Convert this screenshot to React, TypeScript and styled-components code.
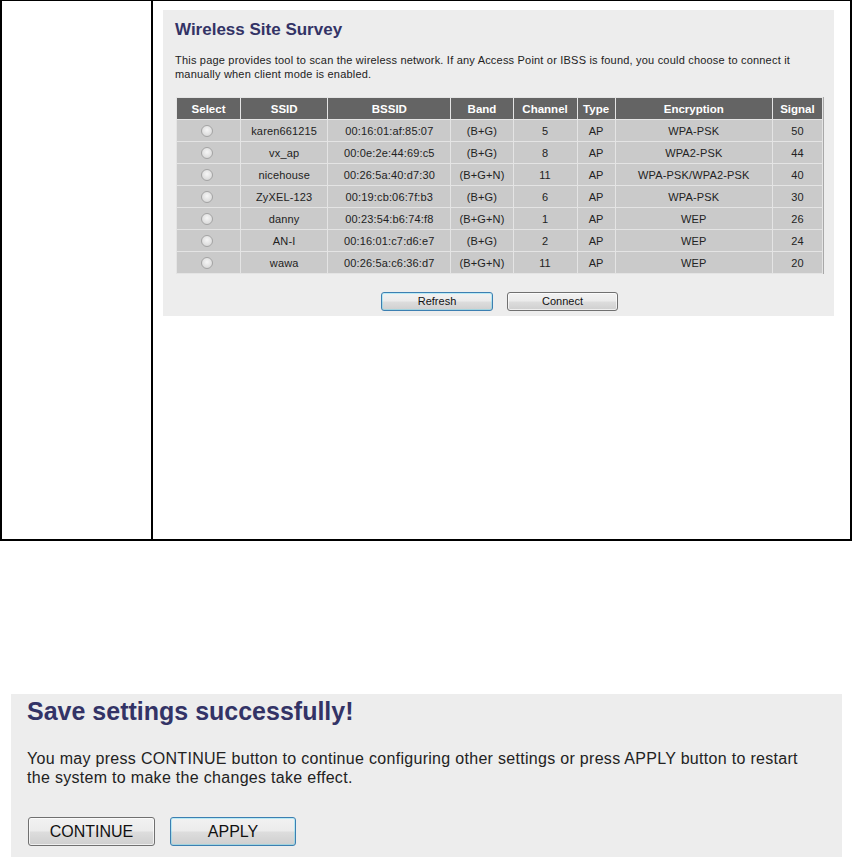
import React from "react";
import styled, { createGlobalStyle } from "styled-components";

const GlobalStyle = createGlobalStyle`
  html, body {
    margin: 0;
    padding: 0;
    background: #ffffff;
  }
  body {
    font-family: Arial, "Liberation Sans", sans-serif;
    color: #222222;
  }
`;

const Page = styled.div`
  width: 853px;
  height: 858px;
  display: flex;
  flex-direction: column;
  overflow: hidden;
`;

const OuterTable = styled.div`
  width: 852px;
  height: 541px;
  box-sizing: border-box;
  display: grid;
  grid-template-columns: 151px 1fr;
  border-top: 1px solid #000;
  border-left: 2px solid #000;
  border-right: 2px solid #000;
  border-bottom: 2px solid #000;
`;

const SideCell = styled.div`
  border-right: 2px solid #000;
`;

const MainCell = styled.div`
  padding: 9px 0 0 10px;
`;

const SurveyPanel = styled.div`
  width: 671px;
  height: 306px;
  box-sizing: border-box;
  background: #ededed;
  padding: 10px 0 0 12px;
  display: flex;
  flex-direction: column;
`;

const PanelTitle = styled.h2<{ $size: number }>`
  margin: 0;
  font-family: Arial, "Liberation Sans", sans-serif;
  font-weight: bold;
  font-size: ${(p) => p.$size}px;
  line-height: ${(p) => Math.round(p.$size * 1.2)}px;
  color: #333366;
`;

const Description = styled.p`
  margin: 13px 0 0 0;
  font-size: 11px;
  line-height: 14px;
  letter-spacing: 0.2px;
  color: #222;
  width: 650px;
`;

const SurveyTable = styled.table`
  margin: 16px 0 0 1px;
  border-collapse: separate;
  border-spacing: 1px;
  background: #e4e4e4;
  border-right: 1px solid #a8a8a8;
  table-layout: fixed;
  width: 648px;
  font-size: 11px;
`;

const HeadCell = styled.th`
  background: #646464;
  color: #ffffff;
  font-weight: bold;
  font-size: 11.5px;
  height: 21px;
  padding: 0;
  text-align: center;
`;

const BodyCell = styled.td`
  background: #cacaca;
  color: #222;
  height: 21px;
  padding: 0;
  text-align: center;
  white-space: nowrap;
  letter-spacing: 0.15px;
`;

const Radio = styled.span`
  display: inline-block;
  width: 10px;
  height: 10px;
  border-radius: 50%;
  border: 1px solid #a4a4a4;
  background: radial-gradient(circle at 50% 40%, #f6f6f6 0%, #dcdcdc 70%, #cfcfcf 100%);
  vertical-align: middle;
  box-sizing: content-box;
  margin-right: 3px;
`;

const ButtonRow = styled.div<{ $gap: number }>`
  display: flex;
  gap: ${(p) => p.$gap}px;
`;

const SurveyButtons = styled(ButtonRow)`
  margin: 18px 0 0 206px;
`;

const FormButton = styled.button<{ $primary?: boolean; $w: number; $h: number; $size: number }>`
  width: ${(p) => p.$w}px;
  height: ${(p) => p.$h}px;
  box-sizing: border-box;
  padding: 0;
  font-family: Arial, "Liberation Sans", sans-serif;
  font-size: ${(p) => p.$size}px;
  color: #111;
  border-radius: 3px;
  border: 1px solid ${(p) => (p.$primary ? "#3c7fb1" : "#707070")};
  box-shadow: ${(p) => (p.$primary ? "inset 0 0 0 1px #48dbfb55" : "inset 0 0 0 1px #ffffffaa")};
  background: linear-gradient(to bottom, #f2f2f2 0%, #ebebeb 48%, #dddddd 52%, #cfcfcf 100%);
  line-height: 1;
`;

const SavePanel = styled.div`
  margin: 153px 0 0 11px;
  width: 831px;
  height: 163px;
  box-sizing: border-box;
  background: #ededed;
  padding: 2px 0 0 16px;
  display: flex;
  flex-direction: column;
`;

const SaveText = styled.p`
  margin: 23px 0 0 0;
  font-size: 16px;
  line-height: 19px;
  letter-spacing: 0.3px;
  color: #222;
  white-space: nowrap;
`;

const SaveButtons = styled(ButtonRow)`
  margin: 30px 0 0 1px;
`;

const columns = [
  { label: "Select", width: 63 },
  { label: "SSID", width: 86 },
  { label: "BSSID", width: 122 },
  { label: "Band", width: 61 },
  { label: "Channel", width: 63 },
  { label: "Type", width: 37 },
  { label: "Encryption", width: 156 },
  { label: "Signal", width: 49 },
];

const networks = [
  ["karen661215", "00:16:01:af:85:07", "(B+G)", "5", "AP", "WPA-PSK", "50"],
  ["vx_ap", "00:0e:2e:44:69:c5", "(B+G)", "8", "AP", "WPA2-PSK", "44"],
  ["nicehouse", "00:26:5a:40:d7:30", "(B+G+N)", "11", "AP", "WPA-PSK/WPA2-PSK", "40"],
  ["ZyXEL-123", "00:19:cb:06:7f:b3", "(B+G)", "6", "AP", "WPA-PSK", "30"],
  ["danny", "00:23:54:b6:74:f8", "(B+G+N)", "1", "AP", "WEP", "26"],
  ["AN-I", "00:16:01:c7:d6:e7", "(B+G)", "2", "AP", "WEP", "24"],
  ["wawa", "00:26:5a:c6:36:d7", "(B+G+N)", "11", "AP", "WEP", "20"],
];

export default function App() {
  return (
    <Page>
      <GlobalStyle />
      <OuterTable>
        <SideCell />
        <MainCell>
          <SurveyPanel>
            <PanelTitle $size={17}>Wireless Site Survey</PanelTitle>
            <Description>
              This page provides tool to scan the wireless network. If any Access Point or IBSS is found, you could
              choose to connect it manually when client mode is enabled.
            </Description>
            <SurveyTable>
              <colgroup>
                {columns.map((c) => (
                  <col key={c.label} style={{ width: c.width }} />
                ))}
              </colgroup>
              <thead>
                <tr>
                  {columns.map((c) => (
                    <HeadCell key={c.label}>{c.label}</HeadCell>
                  ))}
                </tr>
              </thead>
              <tbody>
                {networks.map((row) => (
                  <tr key={row[1]}>
                    <BodyCell>
                      <Radio />
                    </BodyCell>
                    {row.map((value, i) => (
                      <BodyCell key={i}>{value}</BodyCell>
                    ))}
                  </tr>
                ))}
              </tbody>
            </SurveyTable>
            <SurveyButtons $gap={14}>
              <FormButton $primary $w={112} $h={19} $size={11}>
                Refresh
              </FormButton>
              <FormButton $w={111} $h={19} $size={11}>
                Connect
              </FormButton>
            </SurveyButtons>
          </SurveyPanel>
        </MainCell>
      </OuterTable>

      <SavePanel>
        <PanelTitle $size={25}>Save settings successfully!</PanelTitle>
        <SaveText>
          You may press CONTINUE button to continue configuring other settings or press APPLY button to restart
          <br />
          the system to make the changes take effect.
        </SaveText>
        <SaveButtons $gap={15}>
          <FormButton $w={127} $h={29} $size={16}>
            CONTINUE
          </FormButton>
          <FormButton $primary $w={126} $h={29} $size={16}>
            APPLY
          </FormButton>
        </SaveButtons>
      </SavePanel>
    </Page>
  );
}
